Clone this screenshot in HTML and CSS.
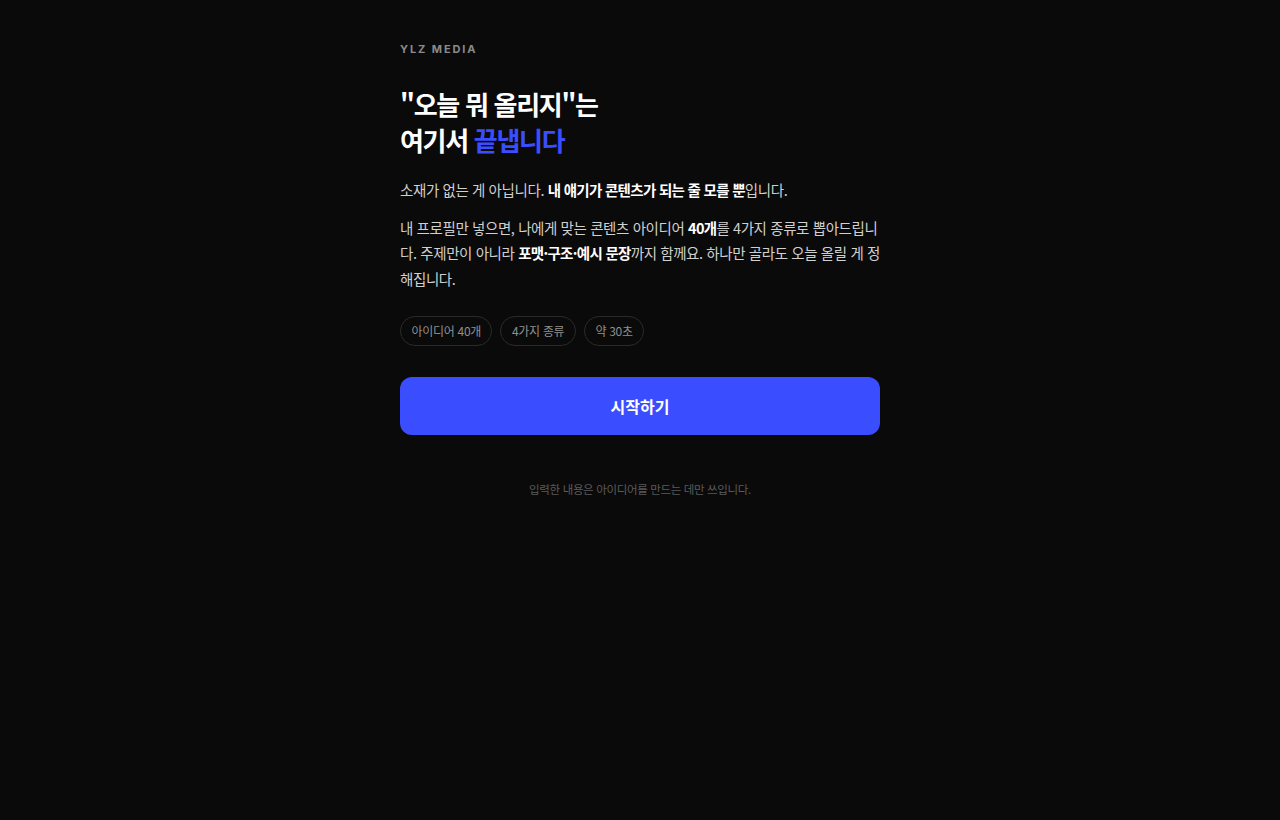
FILE: index.html
```html
<!DOCTYPE html>
<html lang="ko">
<head>
  <meta charset="UTF-8">
  <title>YLZ MEDIA</title>
  <link rel="stylesheet" href="styles.css">
</head>
<body>
  <div class="container">
    <div class="brand">YLZ MEDIA</div>

    <h1 class="title">"오늘 뭐 올리지"는<br>여기서 <span class="accent">끝냅니다</span></h1>

    <p class="lead">소재가 없는 게 아닙니다. <strong>내 얘기가 콘텐츠가 되는 줄 모를 뿐</strong>입니다.</p>
    <p class="lead">내 프로필만 넣으면, 나에게 맞는 콘텐츠 아이디어 <strong>40개</strong>를 4가지 종류로 뽑아드립니다. 주제만이 아니라 <strong>포맷·구조·예시 문장</strong>까지 함께요. 하나만 골라도 오늘 올릴 게 정해집니다.</p>

    <div class="chips">
      <span class="chip">아이디어 40개</span>
      <span class="chip">4가지 종류</span>
      <span class="chip">약 30초</span>
    </div>

    <button class="start">시작하기</button>

    <p class="note">입력한 내용은 아이디어를 만드는 데만 쓰입니다.</p>
  </div>
</body>
</html>
```

FILE: styles.css
```css
* {
  box-sizing: border-box;
}

body {
  margin: 0;
  background: #0a0a0a;
  color: #d4d4d4;
  font-family: "Noto Sans CJK KR", "Noto Sans", sans-serif;
}

.container {
  width: 480px;
  margin: 0 auto;
  padding-top: 41px;
}

.brand {
  font-family: "Inter", "Noto Sans", sans-serif;
  font-size: 11px;
  font-weight: 700;
  letter-spacing: 1.9px;
  color: #8a8a8a;
  line-height: 16px;
}

.title {
  margin: 29px 0 19px;
  font-size: 26px;
  font-weight: 700;
  line-height: 36px;
  letter-spacing: -1.3px;
  color: #fff;
}

.accent {
  color: #3b4eff;
}

.lead {
  margin: 0 0 12px;
  font-size: 14.5px;
  line-height: 25.5px;
  letter-spacing: -0.4px;
  color: #d0d0d0;
}

.lead strong {
  color: #fff;
  font-weight: 700;
  letter-spacing: -0.7px;
}

.chips {
  display: flex;
  gap: 8px;
  margin-top: 25px;
}

.chip {
  height: 30px;
  padding: 0 10.5px;
  border: 1px solid #2a2a2a;
  border-radius: 15px;
  font-size: 12px;
  line-height: 28px;
  color: #8f8f8f;
  letter-spacing: -0.3px;
}

.start {
  display: block;
  width: 100%;
  height: 58px;
  margin-top: 31px;
  border: none;
  border-radius: 12px;
  background: #3b4eff;
  color: #fff;
  font-family: inherit;
  font-size: 16px;
  font-weight: 700;
  cursor: pointer;
}

.note {
  margin: 46px 0 0;
  text-align: center;
  font-size: 11.5px;
  color: #5a5a5a;
  letter-spacing: -0.35px;
}
```
